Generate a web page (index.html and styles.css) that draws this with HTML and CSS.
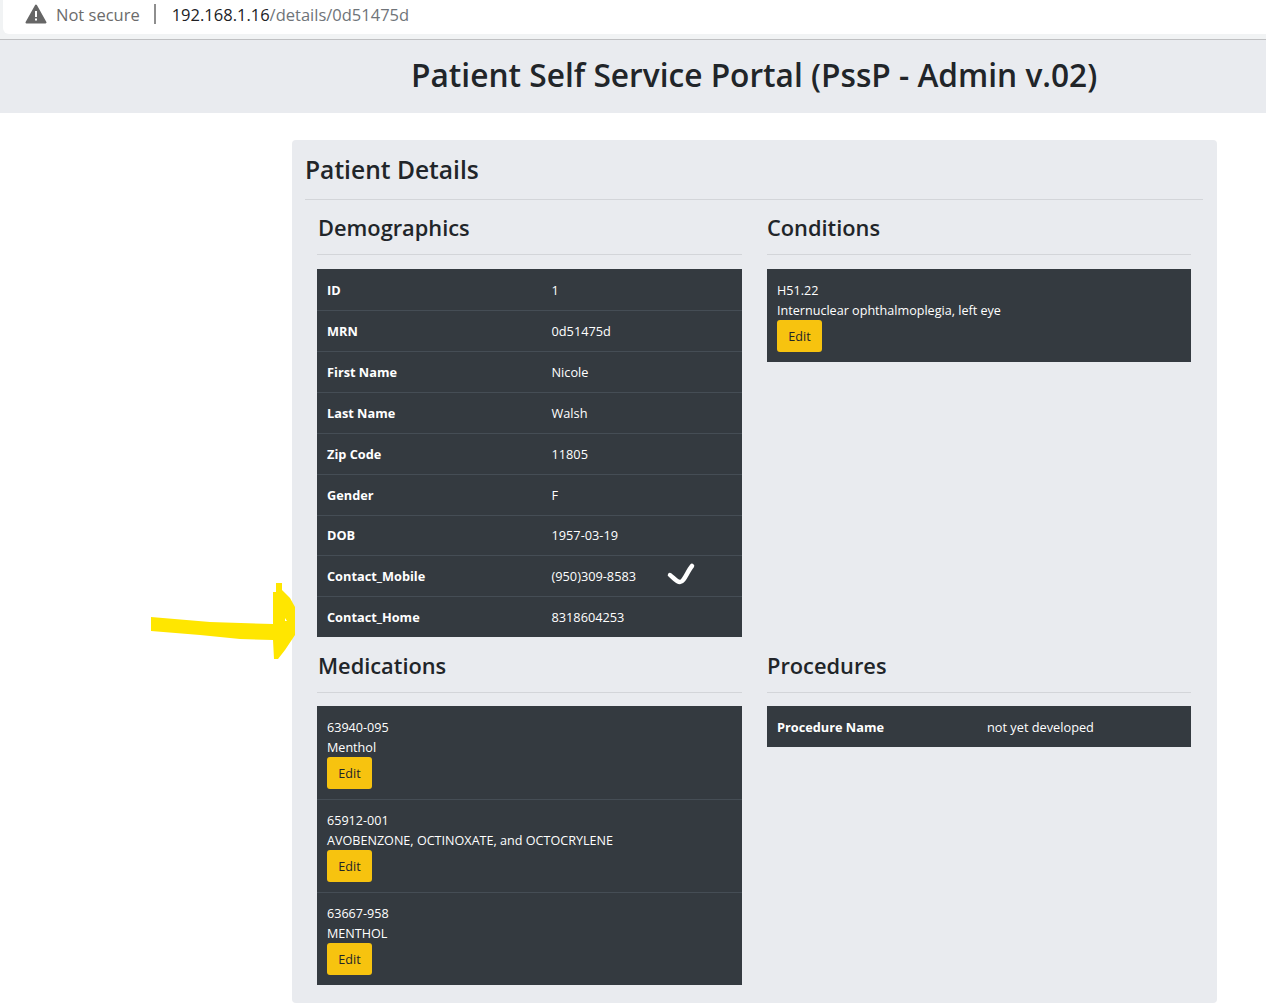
FILE: index.html
```html
<!doctype html>
<html lang="en">
<head>
    <meta charset="UTF-8">
    <title>Patient Details</title>
    <link rel="stylesheet" href="styles.css">
</head>
<body>
<div class="address-bar">
    <div class="address-box">
        <svg class="warn-icon" width="22" height="20" viewBox="0 0 22 20">
            <path d="M11 1.5 L20.5 18.5 H1.5 Z" fill="#666" stroke="#666" stroke-width="2" stroke-linejoin="round"/>
            <rect x="10" y="7" width="2" height="6" fill="#fff"/>
            <rect x="10" y="14.5" width="2" height="2" fill="#fff"/>
        </svg>
        <span class="not-secure">Not secure</span>
        <span class="divider"></span>
        <span class="url"><b>192.168.1.16</b>/details/0d51475d</span>
    </div>
</div>

<div class="title-band">
    <h1>Patient Self Service Portal (PssP - Admin v.02)</h1>
</div>

<div class="card">
    <h2>Patient Details</h2>
    <div class="columns">
        <div class="col">
            <h3>Demographics</h3>
            <table class="info-table demo-table">
                <tr><th>ID</th><td>1</td></tr>
                <tr><th>MRN</th><td>0d51475d</td></tr>
                <tr><th>First Name</th><td>Nicole</td></tr>
                <tr><th>Last Name</th><td>Walsh</td></tr>
                <tr><th>Zip Code</th><td>11805</td></tr>
                <tr><th>Gender</th><td>F</td></tr>
                <tr><th>DOB</th><td>1957-03-19</td></tr>
                <tr><th>Contact_Mobile</th><td>(950)309-8583</td></tr>
                <tr><th>Contact_Home</th><td>8318604253</td></tr>
            </table>
        </div>
        <div class="col">
            <h3>Conditions</h3>
            <div class="list-table">
                <div class="list-item">
                    <div>H51.22</div>
                    <div>Internuclear ophthalmoplegia, left eye</div>
                    <a class="btn-edit">Edit</a>
                </div>
            </div>
        </div>
        <div class="col">
            <h3>Medications</h3>
            <div class="list-table">
                <div class="list-item">
                    <div>63940-095</div>
                    <div>Menthol</div>
                    <a class="btn-edit">Edit</a>
                </div>
                <div class="list-item">
                    <div>65912-001</div>
                    <div>AVOBENZONE, OCTINOXATE, and OCTOCRYLENE</div>
                    <a class="btn-edit">Edit</a>
                </div>
                <div class="list-item">
                    <div>63667-958</div>
                    <div>MENTHOL</div>
                    <a class="btn-edit">Edit</a>
                </div>
            </div>
        </div>
        <div class="col">
            <h3>Procedures</h3>
            <table class="info-table proc-table">
                <tr><th>Procedure Name</th><td>not yet developed</td></tr>
            </table>
        </div>
    </div>
</div>

<!-- hand drawn marks on top of the page -->
<svg class="mark-arrow" width="150" height="82" viewBox="0 0 150 82">
    <path d="M1 37 L60 42 L123 44 L123 12 L126 12 L126 3 L132 3 L132 10 L140 18 L145 27 L145 55 L135 70 L128 79 L124 79 L123 60 L90 59 L50 55 L1 51 Z" fill="#ffe600"/>
    <path d="M135 38 L137 41 L135 41 Z" fill="#fff"/>
</svg>
<svg class="mark-check" width="34" height="30" viewBox="0 0 34 30">
    <path d="M8 17 C11 19 14 24 18 24 C22 24 25 14 30 8" fill="none" stroke="#fff" stroke-width="4.5" stroke-linecap="round" stroke-linejoin="round"/>
</svg>
</body>
</html>
```

FILE: styles.css
```css
* {
    margin: 0;
    padding: 0;
    box-sizing: border-box;
}

html, body {
    height: 1003px;
    overflow: hidden;
}

body {
    position: relative;
    background: #fff;
    color: #212529;
    font-family: "Open Sans", "Noto Sans", sans-serif;
}

.address-bar {
    height: 40px;
    padding: 0 0 5px 3px;
    background: #f1f3f4;
    border-bottom: 1px solid #bfc0c2;
}

.address-box {
    display: flex;
    align-items: center;
    height: 34px;
    padding: 0 0 6px 22px;
    background: #fff;
    border-bottom-left-radius: 6px;
}

.warn-icon {
    margin-right: 9px;
}

.not-secure {
    font-size: 16.5px;
    color: #6b6b6b;
}

.divider {
    width: 2px;
    height: 20px;
    margin: 0 16px 0 14px;
    background: #8e8e8e;
}

.url {
    font-size: 16.5px;
    color: #6f7479;
}

.url b {
    font-weight: normal;
    color: #202124;
}

.title-band {
    height: 73px;
    padding-left: 411px;
    background: #e9ebef;
}

h1 {
    font-size: 31.66px;
    font-weight: 600;
    line-height: 70px;
    white-space: nowrap;
}

.card {
    width: 925px;
    height: 863px;
    margin: 27px 0 0 292px;
    padding: 12px 14px 0 13px;
    background: #e9ebef;
    border-radius: 4px;
}

h2 {
    height: 48px;
    font-size: 24.6px;
    font-weight: 600;
    line-height: 36px;
    border-bottom: 1px solid #d3d5d9;
}

.columns {
    display: grid;
    grid-template-columns: 425px 424px;
    grid-template-rows: 438px auto;
    column-gap: 25px;
    padding: 0 12px;
}

h3 {
    height: 55px;
    margin-bottom: 14px;
    font-size: 21.8px;
    font-weight: 600;
    line-height: 55px;
    border-bottom: 1px solid #d3d5d9;
}

.col:nth-child(odd) h3 {
    padding-left: 1px;
}

.col:nth-child(n+3) h3 {
    margin-bottom: 13px;
}

.info-table {
    width: 100%;
    border-collapse: collapse;
    background: #343a40;
    color: #fff;
    font-size: 12.75px;
}

.info-table th,
.info-table td {
    height: 41px;
    padding: 1px 10px 0;
    text-align: left;
    vertical-align: middle;
    border-top: 1px solid #454d55;
}

.demo-table tr:nth-child(n+7) th,
.demo-table tr:nth-child(n+7) td {
    height: 40.67px;
    padding-top: 0;
}

.info-table tr:first-child th,
.info-table tr:first-child td {
    border-top: 0;
}

.demo-table th {
    width: 224.5px;
}

.proc-table th {
    width: 210px;
}

.list-table {
    background: #343a40;
    color: #fff;
    font-size: 12.6px;
    line-height: 20px;
}

.list-item {
    height: 93px;
    padding: 11px 10px 0;
    border-top: 1px solid #454d55;
}

.list-item:first-child {
    padding-top: 12px;
    border-top: 0;
}

.btn-edit {
    display: block;
    width: 45px;
    height: 32px;
    margin-top: -1px;
    background: #f7c30f;
    color: #212529;
    border-radius: 3px;
    text-align: center;
    line-height: 33px;
}

.mark-arrow {
    position: absolute;
    left: 150px;
    top: 580px;
}

.mark-check {
    position: absolute;
    left: 662px;
    top: 558px;
}
```
